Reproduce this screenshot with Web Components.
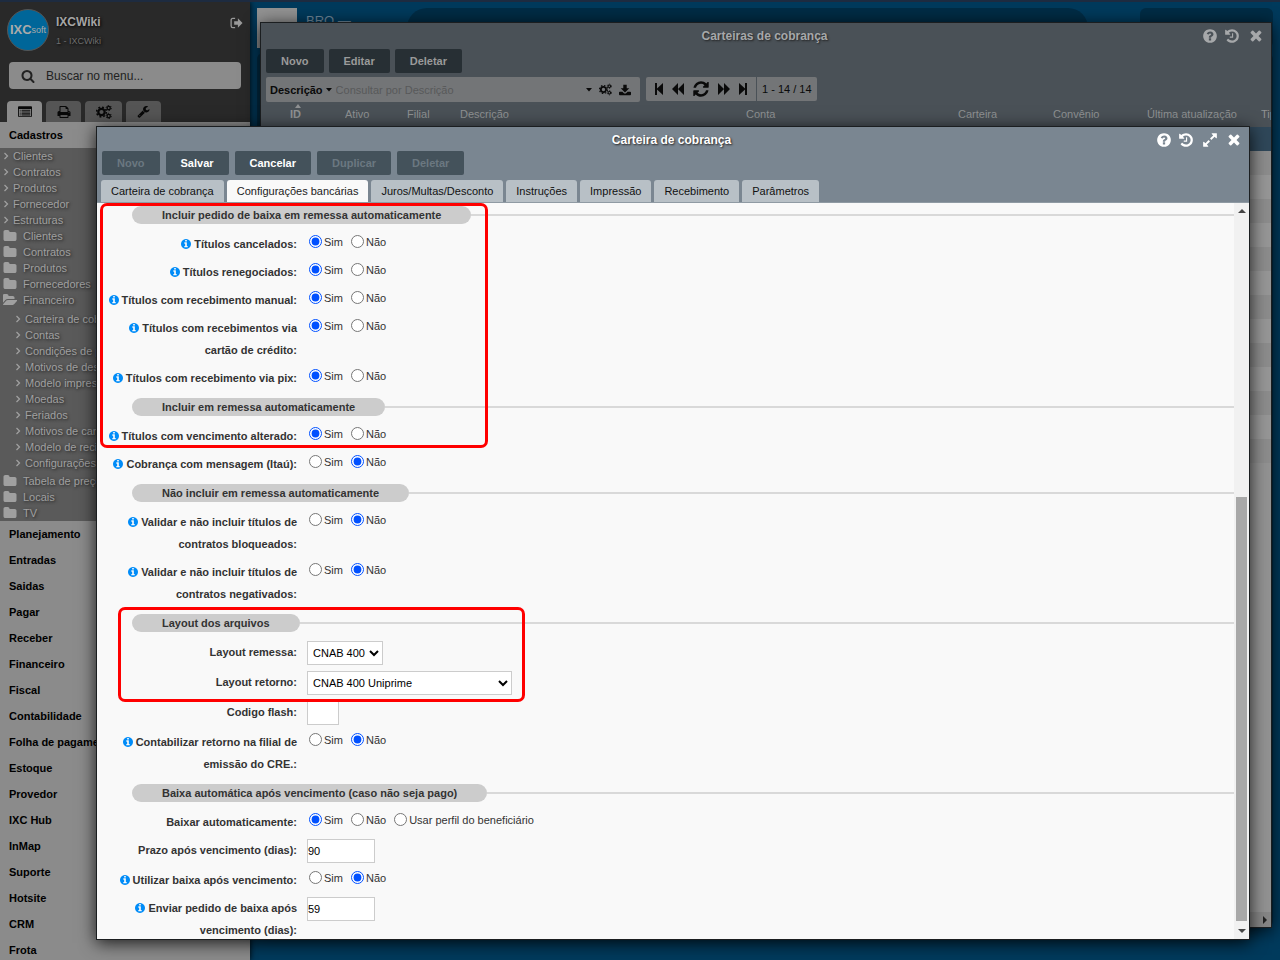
<!DOCTYPE html>
<html lang="pt-BR">
<head>
<meta charset="utf-8">
<title>Carteira de cobrança</title>
<style>
html, body { margin: 0; height: 100%; }
body { font: 11px/16px "Liberation Sans", Arial, sans-serif; overflow: hidden; background: #003a5c; }
</style>
</head>
<body>
<erp-desktop></erp-desktop>
<script>
const DISC = 'M1664 896q0 209-103 385.500t-279.500 279.500-385.500 103-385.500-103-279.500-279.500-103-385.500 103-385.500 279.500-279.500 385.500-103 385.500 103 279.500 279.500 103 385.500z';
const p = (d, box = '0 0 1792 1792') => [box, `<path fill-rule="evenodd" d="${d}"/>`];
const ICONS = {
  question: p('M1024 1376v-192q0-14-9-23t-23-9h-192q-14 0-23 9t-9 23v192q0 14 9 23t23 9h192q14 0 23-9t9-23zm256-672q0-88-55.500-163t-138.500-116-170-41q-243 0-371 213-15 24 8 42l132 100q7 6 19 6 16 0 25-12 53-68 86-92 34-24 86-24 48 0 85.500 26t37.500 59q0 38-20 61t-68 45q-63 28-115.500 86.500t-52.500 125.500v36q0 14 9 23t23 9h192q14 0 23-9t9-23q0-19 21.500-49.500t54.500-49.500q32-18 49-28.500t46-35 44.500-48 28-60.500 12.500-81z' + DISC),
  info: p('M1152 1376v-160q0-14-9-23t-23-9h-96v-512q0-14-9-23t-23-9h-320q-14 0-23 9t-9 23v160q0 14 9 23t23 9h96v320h-96q-14 0-23 9t-9 23v160q0 14 9 23t23 9h448q14 0 23-9t9-23zm-128-896v-160q0-14-9-23t-23-9h-192q-14 0-23 9t-9 23v160q0 14 9 23t23 9h192q14 0 23-9t9-23z' + DISC, '128 128 1536 1536'),
  history: p('M1664 896q0 156-61 298t-164 245-245 164-298 61q-172 0-327-72.500t-264-204.500q-7-10-6.500-22.500t8.500-20.500l137-138q10-9 25-9 16 2 23 12 73 95 179 147t225 52q104 0 198.500-40.500t163.500-109.500 109.500-163.500 40.500-198.500-40.500-198.500-109.500-163.500-163.500-109.500-198.500-40.500q-98 0-188 35.500t-160 101.500l137 138q31 30 14 69-17 40-59 40h-448q-26 0-45-19t-19-45v-448q0-42 40-59 39-17 69 14l130 129q107-101 244.500-156.500t284.500-55.500q156 0 298 61t245 164 164 245 61 298zm-640-288v448q0 14-9 23t-23 9h-320q-14 0-23-9t-9-23v-64q0-14 9-23t23-9h224v-352q0-14 9-23t23-9h64q14 0 23 9t9 23z'),
  close: p('M1490 1322q0 40-28 68l-136 136q-28 28-68 28t-68-28l-294-294-294 294q-28 28-68 28t-68-28l-136-136q-28-28-28-68t28-68l294-294-294-294q-28-28-28-68t28-68l136-136q28-28 68-28t68 28l294 294 294-294q28-28 68-28t68 28l136 136q28 28 28 68t-28 68l-294 294 294 294q28 28 28 68z', '240 300 1312 1312'),
  expand: p('M883 1056q0 13-10 23l-332 332 144 144q19 19 19 45t-19 45-45 19h-448q-26 0-45-19t-19-45v-448q0-26 19-45t45-19 45 19l144 144 332-332q10-10 23-10t23 10l114 114q10 10 10 23zm781-864v448q0 26-19 45t-45 19-45-19l-144-144-332 332q-10 10-23 10t-23-10l-114-114q-10-10-10-23t10-23l332-332-144-144q-19-19-19-45t19-45 45-19h448q26 0 45 19t19 45z'),
  search: p('M1216 832q0-185-131.500-316.500t-316.500-131.500-316.500 131.500-131.500 316.500 131.500 316.500 316.500 131.500 316.500-131.500 131.500-316.500zm512 832q0 52-38 90t-90 38q-54 0-90-38l-343-342q-179 124-399 124-143 0-273.500-55.500t-225-150-150-225-55.500-273.500 55.500-273.500 150-225 225-150 273.500-55.500 273.500 55.500 225 150 150 225 55.500 273.500q0 220-124 399l343 343q37 37 37 90z'),
  wrench: p('M448 1472q0-26-19-45t-45-19-45 19-19 45 19 45 45 19 45-19 19-45zm644-420l-682 682q-37 37-90 37-52 0-91-37l-106-108q-38-36-38-90 0-53 38-91l681-681q39 98 114.500 173.500t173.500 114.500zm634-435q0 39-23 106-47 134-164.500 217.500t-258.500 83.500q-185 0-316.500-131.500t-131.500-316.500 131.500-316.500 316.500-131.500q58 0 121.500 16.500t107.500 46.500q16 11 16 28t-16 28l-293 169v224l193 107q5-3 79-48.500t135.500-81 70.500-35.500q15 0 23.500 10t8.500 25z'),
  print: p('M448 1536h896v-256h-896v256zm0-640h896v-384h-160q-40 0-68-28t-28-68v-160h-640v640zm1152 64q0-26-19-45t-45-19-45 19-19 45 19 45 45 19 45-19 19-45zm128 0v416q0 13-9.500 22.500t-22.500 9.500h-224v160q0 40-28 68t-68 28h-960q-40 0-68-28t-28-68v-160h-224q-13 0-22.500-9.500t-9.500-22.500v-416q0-79 56.500-135.500t135.500-56.500h64v-544q0-40 28-68t68-28h672q40 0 88 20t76 48l152 152q28 28 48 76t20 88v256h64q79 0 135.500 56.500t56.500 135.500z'),
  refresh: p('M1639 1056q0 5-1 7-64 268-268 434.500t-478 166.500q-146 0-282.500-55t-243.500-157l-129 129q-19 19-45 19t-45-19-19-45v-448q0-26 19-45t45-19h448q26 0 45 19t19 45-19 45l-137 137q71 66 161 102t187 36q134 0 250-65t186-179q11-17 53-117 8-23 30-23h192q13 0 22.500 9.500t9.500 22.500zm25-800v448q0 26-19 45t-45 19h-448q-26 0-45-19t-19-45 19-45l138-138q-148-137-349-137-134 0-250 65t-186 179q-11 17-53 117-8 23-30 23h-199q-13 0-22.500-9.500t-9.500-22.500v-7q65-268 270-434.500t480-166.500q146 0 284 55.500t245 156.500l130-129q19-19 45-19t45 19 19 45z', '100 100 1592 1592'),
  folder: p('M1728 608v704q0 92-66 158t-158 66h-1216q-92 0-158-66t-66-158v-960q0-92 66-158t158-66h320q92 0 158 66t66 158v32h672q92 0 158 66t66 158z'),
  folderopen: p('M1815 952q0 31-31 66l-336 396q-43 51-120.500 86.500t-143.500 35.500h-1088q-34 0-60.500-13t-26.500-43q0-31 31-66l336-396q43-51 120.500-86.500t143.500-35.500h1088q34 0 60.500 13t26.500 43zm-343-344v160h-832q-94 0-197 47.500t-164 119.500l-337 396-5 6q0-4-.5-12.500t-.5-12.500v-960q0-92 66-158t158-66h320q92 0 158 66t66 158v32h544q92 0 158 66t66 158z'),
  download: ['0 0 14 14', '<path d="M5 1h4v4h3L7 10 2 5h3zM1 9h3l2 2h2l2-2h3q1 0 1 1v2q0 1-1 1H1q-1 0-1-1v-2q0-1 1-1z"/>'],
  list: ['0 0 16 14', '<path fill-rule="evenodd" d="M1 1h14q1 0 1 1v10q0 1-1 1H1q-1 0-1-1V2q0-1 1-1zM1 4v8h14V4z"/><path d="M2 5h1v1H2zM4 5h10v1H4zM2 7h1v1H2zM4 7h10v1H4zM2 9h1v1H2zM4 9h10v1H4z"/><path d="M2 10.500h1v1H2zM4 10.500h10v1H4z"/>'],
  cogs: ['0 0 16 14', '<g fill="none" stroke="currentColor"><circle cx="5.500" cy="7" r="3.200" stroke-width="2.200"/><circle cx="5.500" cy="7" r="4.900" stroke-width="1.500" stroke-dasharray="1.900 1.950"/><circle cx="12.700" cy="3" r="1.600" stroke-width="1.300"/><circle cx="12.700" cy="3" r="2.600" stroke-width="1" stroke-dasharray="1.360 1.360"/><circle cx="12.700" cy="11" r="1.600" stroke-width="1.300"/><circle cx="12.700" cy="11" r="2.600" stroke-width="1" stroke-dasharray="1.360 1.360"/></g>'],
  logout: ['0 0 14 12', '<path d="M5.500 1H3Q1.200 1 1.200 3v6q0 2 1.800 2h2.500" fill="none" stroke="currentColor" stroke-width="1.400"/><path d="M4.500 4H8.500V1L13.500 6 8.500 11V8H4.500z"/>'],
  angle: ['0 0 6 8', '<path d="M1.500 1 4.500 4 1.500 7" fill="none" stroke="currentColor" stroke-width="1.300"/>'],
  caret: ['0 0 6 4', '<path d="M0 0h6L3 3.500z"/>'],
  up: ['0 0 6 4', '<path d="M0 4h6L3 0z"/>'],
  first: ['0 0 8 12', '<path d="M0 0h2v5.500L8 0v12L2 6.500V12H0z"/>'],
  last: ['0 0 8 12', '<path d="M8 0H6v5.500L0 0v12l6-5.500V12h2z"/>'],
  back: ['0 0 14 12', '<path d="M7 0v12L1 6zM13 0v12L7 6z"/>'],
  forward: ['0 0 14 12', '<path d="M1 0v12l6-6zM7 0v12l6-6z"/>'],
  tri: ['0 0 8 4', '<path d="M0 4h8L4 0z"/>'],
  trid: ['0 0 8 4', '<path d="M0 0h8L4 4z"/>'],
  trir: ['0 0 4 8', '<path d="M0 0v8l4-4z"/>']
};

class Base extends HTMLElement {
  connectedCallback() {
    if (this.shadowRoot) return;
    this.attachShadow({ mode: 'open' }).innerHTML = `<style>*{box-sizing:border-box}button,input,select{font:inherit;color:inherit}button{border:0;padding:0;margin:0;background:none;cursor:pointer}a{color:inherit;text-decoration:none}${this.css()}</style>${this.html()}`;
  }
  a(name, fallback = '') { return this.getAttribute(name) ?? fallback; }
}

customElements.define('ui-icon', class extends Base {
  css() { return `:host{display:inline-flex;flex:none;width:${this.a('w', '14')}px;height:${this.a('h', this.a('w', '14'))}px}svg{display:block;width:100%;height:100%;fill:currentColor}`; }
  html() { const [box, body] = ICONS[this.a('name')]; return `<svg viewBox="${box}" aria-hidden="true">${body}</svg>`; }
});

customElements.define('tool-button', class extends Base {
  css() { return `:host{display:block}button{display:block;height:24px;padding:0 15px;border-radius:2px;font-weight:bold;background:var(--btn-bg);color:var(--btn-fg)}button:disabled{color:#6b7881}`; }
  html() { return `<button type="button" ${this.hasAttribute('disabled') ? 'disabled' : ''}><slot></slot></button>`; }
});

/* Sidebar ------------------------------------------------------------ */
customElements.define('menu-link', class extends Base {
  css() { return `:host{display:block}a{display:flex;align-items:center;height:16px;white-space:nowrap}
    span{display:flex;width:10px;margin-left:3px}span.f{width:20px}:host([sub]) span{margin-left:15px}`; }
  html() {
    const icon = this.a('icon', 'angle');
    return `<a href="#"><span class="${icon === 'angle' ? '' : 'f'}"><ui-icon name="${icon}" w="${icon === 'angle' ? 6 : 14}" h="${icon === 'angle' ? 8 : 14}"></ui-icon></span><slot></slot></a>`;
  }
});

customElements.define('side-bar', class extends Base {
  css() { return `
    :host{display:flex;flex-direction:column;flex:none;width:250px;background:#292929;color:#999;box-shadow:0 0 6px #000;overflow:hidden;z-index:1}
    header,.search,.tabs,nav{flex:none}
    header{display:flex;align-items:flex-start;gap:7px;padding:7px 7px 0}
    .logo{display:flex;align-items:center;justify-content:center;width:42px;height:42px;border:1px solid #555;border-radius:50%;background:#006699;color:#aaa;font-size:9px}
    .logo b{font-size:13px;line-height:16px}
    .who{flex:1;padding-top:4px;text-shadow:1px 1px 3px #000}
    h1{margin:0;font-size:12px;line-height:18px;color:#a5a5a5}
    p{margin:2px 0 0;font-size:9px;line-height:16px;color:#6e6e6e}
    header button{margin-top:8px;color:#999}
    .search{display:flex;align-items:center;gap:11px;height:27px;margin:11px 9px 0;padding:0 12px;border-radius:4px;background:#8b8b8b;color:#222}
    input{flex:1;min-width:0;border:0;padding:0;background:none;font-size:12px;outline:0}
    input::placeholder{color:#222;opacity:1}
    .tabs{display:flex;gap:4px;padding:12px 7px 0}
    .tabs button{display:flex;align-items:center;justify-content:center;height:21px;width:35px;border-radius:4px 4px 0 0;background:#555;color:#080808}
    .tabs button:nth-child(3){width:37px}
    .tabs button:first-child{background:#8b8b8b}
    .group{display:flex;align-items:center;flex:none;height:26px;padding-left:9px;background:#8b8b8b;color:#000;font-weight:bold}
    .list{background:#5a5a5a;color:#a0a0a0;text-shadow:1px 1px 3px #222}
    .sub{padding:3px 0 2px}`; }
  html() {
    const link = (t, extra = '') => `<menu-link ${extra}>${t}</menu-link>`;
    const f = 'icon="folder"';
    return `<header><div class="logo"><b>IXC</b>soft</div><div class="who"><h1>IXCWiki</h1><p>1 - IXCWiki</p></div><button type="button" aria-label="Sair"><ui-icon name="logout" w="13" h="12"></ui-icon></button></header>
    <label class="search"><ui-icon name="search" w="14"></ui-icon><input type="search" placeholder="Buscar no menu..." aria-label="Buscar no menu"></label>
    <div class="tabs"><button aria-label="Menu"><ui-icon name="list" w="14" h="13"></ui-icon></button><button aria-label="Relatórios"><ui-icon name="print" w="14"></ui-icon></button><button aria-label="Configurações"><ui-icon name="cogs" w="16" h="14"></ui-icon></button><button aria-label="Ferramentas"><ui-icon name="wrench" w="13"></ui-icon></button></div>
    <nav><a class="group" href="#">Cadastros</a><div class="list">
      ${['Clientes', 'Contratos', 'Produtos', 'Fornecedor', 'Estruturas'].map(t => link(t)).join('')}
      ${['Clientes', 'Contratos', 'Produtos', 'Fornecedores'].map(t => link(t, f)).join('')}
      ${link('Financeiro', 'icon="folderopen"')}
      <div class="sub">${['Carteira de cobrança', 'Contas', 'Condições de pagamento', 'Motivos de desconto', 'Modelo impressão', 'Moedas', 'Feriados', 'Motivos de cancelamento', 'Modelo de recibo', 'Configurações'].map(t => link(t, 'sub')).join('')}</div>
      ${['Tabela de preços', 'Locais', 'TV'].map(t => link(t, f)).join('')}</div>
      ${['Planejamento', 'Entradas', 'Saidas', 'Pagar', 'Receber', 'Financeiro', 'Fiscal', 'Contabilidade', 'Folha de pagamento', 'Estoque', 'Provedor', 'IXC Hub', 'InMap', 'Suporte', 'Hotsite', 'CRM', 'Frota'].map(t => `<a class="group" href="#">${t}</a>`).join('')}</nav>`;
  }
});

/* Floating window ----------------------------------------------------- */
customElements.define('app-window', class extends Base {
  css() { return `
    :host{display:flex;flex-direction:column;border:1px solid #1b1e20;background:var(--win-bg);color:var(--title-fg);box-shadow:0 3px 16px rgba(0,0,0,.8);overflow:hidden}
    header{display:grid;grid-template-columns:1fr auto 1fr;align-items:center;flex:none;height:26px;padding-right:3px}
    h2{grid-column:2;margin:0;font-size:12px;line-height:16px;text-shadow:1px 1px 2px #222}
    .tools{display:flex;justify-content:flex-end}
    button{display:flex;align-items:center;justify-content:center;width:24px;height:24px}
    button:first-child{width:20px}
    ::slotted(*){flex:none}`; }
  html() {
    const tools = this.hasAttribute('expand') ? ['question:Ajuda', 'history:Histórico', 'expand:Expandir', 'close:Fechar'] : ['question:Ajuda', 'history:Histórico', 'close:Fechar'];
    return `<header><h2>${this.a('heading')}</h2><div class="tools">${tools.map(t => { const [n, l] = t.split(':'); return `<button type="button" aria-label="${l}"><ui-icon name="${n}" w="${n === 'close' ? 12 : 16}"></ui-icon></button>`; }).join('')}</div></header><slot></slot>`;
  }
});

/* List of portfolios -------------------------------------------------- */
customElements.define('portfolio-list', class extends Base {
  css() { return `
    :host{display:flex;flex-direction:column;flex:1;min-height:0;color:#8f9193}
    .row{display:flex;gap:5px;padding:0 5px}
    .actions{--btn-bg:#272f34;--btn-fg:#9a9a9a}
    .query{gap:6px;margin-top:4px;color:#0a0a0a}
    .filter{display:flex;align-items:center;gap:4px;width:374px;height:25px;padding:0 9px 0 4px;border-radius:2px;background:#737577}
    .filter b{display:flex;align-items:center;gap:3px}
    .filter input{flex:1;min-width:0;border:0;padding:0;background:none}
    .filter input::placeholder{color:#58595a;opacity:1}
    .filter button + button{margin-left:3px}
    .filter button{display:flex}
    .pager{display:flex;align-items:center;height:24px;border-radius:2px;background:#737577}
    .nav{display:flex;align-items:center;gap:8px;height:24px;padding:0 9px;border-right:1px solid #4a5157}
    .pager button{display:flex}
    .pager span{padding:0 5px}
    .grid{flex:1;min-height:0;overflow:hidden;background:#929292}
    table{width:100%;table-layout:fixed;border-collapse:collapse}
    th,td{height:24px;padding:0;text-align:left;font-weight:normal;white-space:nowrap;overflow:hidden}
    th{height:25px;padding-bottom:2px;background:#4a5157}
    th.id{padding:0 0 0 29px;font-weight:bold}
    th.id ui-icon{display:block;margin:0 0 0 5px}
    th.id span{display:block;line-height:12px;margin-bottom:5px}
    tbody tr{background:#969696}tbody tr:nth-child(even){background:#8c8c8c}tbody tr:first-child{background:#2f4759}
    .bar{display:flex;align-items:center;justify-content:flex-end;height:15px;padding-right:4px;background:#868686;color:#222}`; }
  html() {
    const cols = [['Ativo', 62], ['Filial', 53], ['Descrição', 286], ['Conta', 212], ['Carteira', 95], ['Convênio', 94], ['Última atualização', 114], ['Tipo', 0]];
    return `<div class="row actions"><tool-button>Novo</tool-button><tool-button>Editar</tool-button><tool-button>Deletar</tool-button></div>
    <div class="row query"><div class="filter"><button type="button"><b>Descrição <ui-icon name="caret" w="6" h="4"></ui-icon></b></button><input type="text" placeholder="Consultar por Descrição" aria-label="Consultar por Descrição"><button type="button" aria-label="Opções"><ui-icon name="caret" w="6" h="4"></ui-icon></button><button type="button" aria-label="Filtros"><ui-icon name="cogs" w="13"></ui-icon></button><button type="button" aria-label="Exportar"><ui-icon name="download" w="12"></ui-icon></button></div>
    <div class="pager"><div class="nav">${[['first', 8, 12, 'Primeira'], ['back', 14, 12, 'Anterior'], ['refresh', 16, 16, 'Atualizar'], ['forward', 14, 12, 'Próxima'], ['last', 8, 12, 'Última']].map(([n, w, h, l]) => `<button type="button" aria-label="${l}"><ui-icon name="${n}" w="${w}" h="${h}"></ui-icon></button>`).join('')}</div><span>1 - 14 / 14</span></div></div>
    <div class="grid"><table><colgroup><col style="width:84px">${cols.map(c => `<col${c[1] ? ` style="width:${c[1]}px"` : ''}>`).join('')}</colgroup>
    <thead><tr><th class="id"><ui-icon name="up" w="6" h="4"></ui-icon><span>ID</span></th>${cols.map(c => `<th>${c[0]}</th>`).join('')}</tr></thead>
    <tbody>${('<tr>' + '<td></td>'.repeat(9) + '</tr>').repeat(14)}</tbody></table></div>
    <div class="bar"><ui-icon name="trir" w="4" h="8"></ui-icon></div>`;
  }
});

/* Form ---------------------------------------------------------------- */
customElements.define('form-section', class extends Base {
  css() { return `:host{display:block;padding-top:3px}
    header{display:flex;align-items:center;margin:0 0 9px 35px}
    h3{margin:0;height:18px;padding:0 30px;border-radius:9px;background:#ccc;font-size:11px;line-height:18px}
    header::after{content:"";flex:1;height:2px;background:#d9d9d9}`; }
  html() { return `<header><h3>${this.a('heading')}</h3></header><slot></slot>`; }
});

let serial = 0;
customElements.define('form-row', class extends Base {
  css() { return `:host{display:flex;align-items:flex-start;gap:10px;margin-bottom:6px}
    .label{flex:none;width:200px;padding-left:10px;text-align:right;font-weight:bold;line-height:22px}
    .label ui-icon{color:#008cf8;margin-right:3px;vertical-align:-1px}
    .options{display:flex;gap:8px;height:18px;padding-left:2px;line-height:18px}
    .options label{display:flex;align-items:flex-start;gap:2px}
    input[type=radio]{width:13px;height:13px;margin:2px 0 0;accent-color:#0050ff}
    input[type=text],select{height:24px;border:1px solid #ccc;border-radius:0;background:#fff;color:#000}
    input[type=text]{padding:0}
    select{padding:0 0 0 1px}`; }
  html() {
    const id = 'c' + (++serial), value = this.a('value');
    const info = this.hasAttribute('info') ? '<ui-icon name="info" w="10"></ui-icon>' : '';
    const width = this.a('width');
    const text = info + this.a('label');
    if (this.hasAttribute('select')) return `<label class="label" for="${id}">${text}</label><select id="${id}" style="width:${width}px"><option>${value}</option></select>`;
    if (width) return `<label class="label" for="${id}">${text}</label><input type="text" id="${id}" value="${value}" style="width:${width}px">`;
    const options = ['Sim', 'Não'].concat(this.a('more') ? [this.a('more')] : []);
    return `<span class="label" id="${id}">${text}</span><div class="options" role="radiogroup" aria-labelledby="${id}">${options.map(o => `<label><input type="radio" name="r${id}" ${o === value ? 'checked' : ''}>${o}</label>`).join('')}</div>`;
  }
});

customElements.define('portfolio-form', class extends Base {
  css() { return `
    :host{display:flex;flex-direction:column;flex:1;min-height:0;color:#333}
    .actions{display:flex;gap:6px;margin-top:-2px;padding:0 5px;--btn-bg:#44525b;--btn-fg:#fff}
    .tabs{display:flex;gap:3px;padding:5px 4px 0;border-bottom:1px solid #8f9aa3}
    .tabs button{height:22px;padding:0 10px;border-radius:3px 3px 0 0;background:#b8c0c6;color:#111}
    .tabs button[aria-selected=true]{background:#f9f9f9;color:#222}
    .view{display:flex;flex:1;min-height:0;background:#f9f9f9}
    .fields{flex:1;min-width:0;overflow:hidden}
    .scroll{display:flex;flex-direction:column;align-items:center;width:15px;padding:6px 0;background:#f1f1f1;color:#444}
    .thumb{flex:424;width:11px;background:#a8a8a8}
    .space{flex:284}
    .end{margin-top:8px}`; }
  html() {
    const tabs = ['Carteira de cobrança', 'Configurações bancárias', 'Juros/Multas/Desconto', 'Instruções', 'Impressão', 'Recebimento', 'Parâmetros'];
    return `<div class="actions"><tool-button disabled>Novo</tool-button><tool-button>Salvar</tool-button><tool-button>Cancelar</tool-button><tool-button disabled>Duplicar</tool-button><tool-button disabled>Deletar</tool-button></div>
    <div class="tabs" role="tablist">${tabs.map((t, i) => `<button type="button" role="tab" aria-selected="${i === 1}">${t}</button>`).join('')}</div>
    <div class="view"><div class="fields">
      <form-section heading="Incluir pedido de baixa em remessa automaticamente">
        <form-row info label="Títulos cancelados:" value="Sim"></form-row>
        <form-row info label="Títulos renegociados:" value="Sim"></form-row>
        <form-row info label="Títulos com recebimento manual:" value="Sim"></form-row>
        <form-row info label="Títulos com recebimentos via cartão de crédito:" value="Sim"></form-row>
        <form-row info label="Títulos com recebimento via pix:" value="Sim"></form-row>
      </form-section>
      <form-section heading="Incluir em remessa automaticamente">
        <form-row info label="Títulos com vencimento alterado:" value="Sim"></form-row>
        <form-row info label="Cobrança com mensagem (Itaú):" value="Não"></form-row>
      </form-section>
      <form-section heading="Não incluir em remessa automaticamente">
        <form-row info label="Validar e não incluir títulos de contratos bloqueados:" value="Não"></form-row>
        <form-row info label="Validar e não incluir títulos de contratos negativados:" value="Não"></form-row>
      </form-section>
      <form-section heading="Layout dos arquivos">
        <form-row select label="Layout remessa:" value="CNAB 400" width="76"></form-row>
        <form-row select label="Layout retorno:" value="CNAB 400 Uniprime" width="205"></form-row>
        <form-row label="Codigo flash:" width="32"></form-row>
        <form-row info label="Contabilizar retorno na filial de emissão do CRE.:" value="Não"></form-row>
      </form-section>
      <form-section heading="Baixa automática após vencimento (caso não seja pago)">
        <form-row label="Baixar automaticamente:" value="Sim" more="Usar perfil do beneficiário"></form-row>
        <form-row label="Prazo após vencimento (dias):" value="90" width="68"></form-row>
        <form-row info label="Utilizar baixa após vencimento:" value="Não"></form-row>
        <form-row info label="Enviar pedido de baixa após vencimento (dias):" value="59" width="68"></form-row>
      </form-section>
    </div><div class="scroll"><ui-icon name="tri" w="8" h="4"></ui-icon><div class="space"></div><div class="thumb"></div><ui-icon class="end" name="trid" w="8" h="4"></ui-icon></div></div>`;
  }
});

/* Desktop ------------------------------------------------------------- */
customElements.define('erp-desktop', class extends Base {
  css() { return `
    :host{display:flex;box-sizing:border-box;position:relative;height:100vh;border-top:2px solid #1d2b40;background:#003a5c;overflow:hidden}
    .wall{display:flex;flex:1;flex-direction:column;gap:5px;padding:6px 7px}
    .top{display:flex;align-items:flex-start;height:40px;color:#6e8698;font-size:13px}
    .top i{width:40px;height:40px;background:#929292}
    .top span{width:101px;margin:5px 0 0 9px}
    .top u{flex:1;height:40px;border-radius:26px;background:#002c45}
    .top s{width:133px;height:40px;margin-left:52px;border-radius:6px;background:#002c45}
    .board{flex:1;margin-bottom:27px;border-radius:6px;background:#002c45}
    app-window{position:absolute}
    .list{inset:20px 8px 32px 260px;--win-bg:#4a5157;--title-fg:#a6a8aa;z-index:2}
    .form{inset:124px 30px 20px 96px;--win-bg:#7a8691;--title-fg:#fff;z-index:3}
    .mark{position:absolute;z-index:4;border:3px solid #f00;border-radius:7px;pointer-events:none}
    .m1{left:100px;top:201px;width:388px;height:245px}
    .m2{left:118px;top:605px;width:407px;height:95px}`; }
  html() {
    return `<side-bar></side-bar><div class="wall"><div class="top"><i></i><span>BRO —</span><u></u><s></s></div><div class="board"></div></div>
    <app-window class="list" heading="Carteiras de cobrança"><portfolio-list style="flex:1"></portfolio-list></app-window>
    <app-window class="form" expand heading="Carteira de cobrança"><portfolio-form style="flex:1"></portfolio-form></app-window>
    <div class="mark m1"></div><div class="mark m2"></div>`;
  }
});
</script>
</body>
</html>
